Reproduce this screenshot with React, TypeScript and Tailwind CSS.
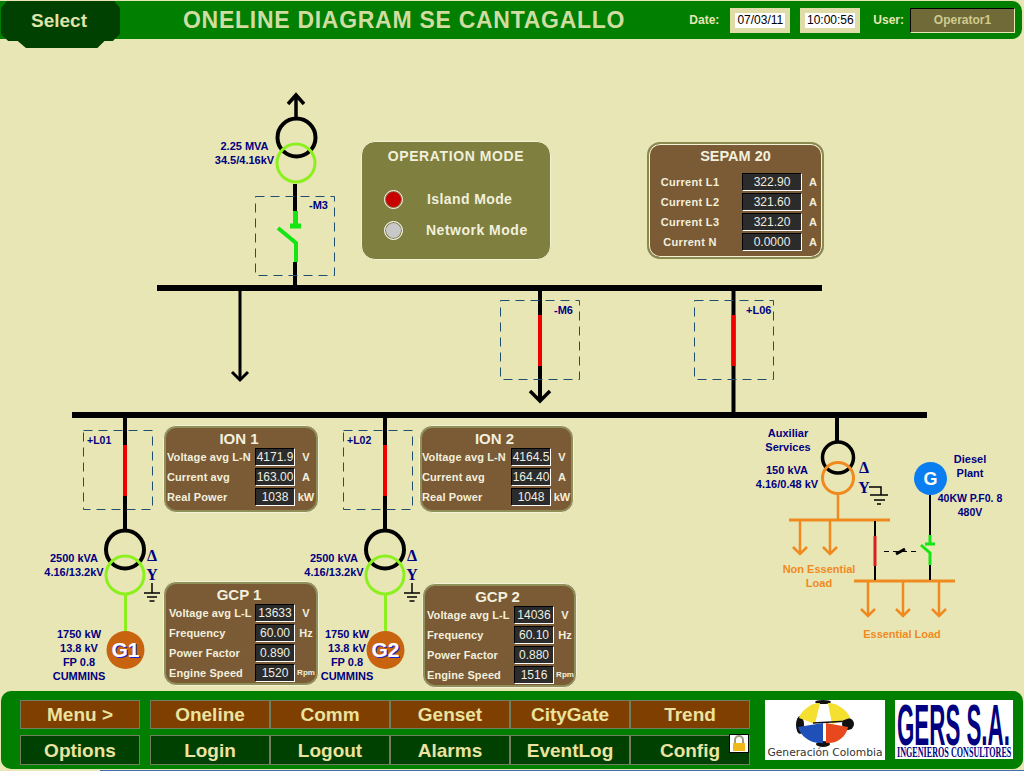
const NAVY = "#000080";
const ORANGE = "#f08a1e";
const LIME = "#8cf01e";
const SWITCH_GREEN = "#14e614";

type Row = { label: string; value: string; unit?: string; small?: boolean };

function Readout({ value }: { value: string }) {
  return (
    <div className="flex h-[18px] w-10 items-center justify-center border border-t-black border-l-black border-r-white border-b-white bg-[#2b2b2b] text-[12px] font-normal leading-none text-[#efefe0]">
      {value}
    </div>
  );
}

// brown meter box used for ION / GCP
function Meter({ title, rows, className, indent }: { title: string; rows: Row[]; className: string; indent: string }) {
  return (
    <div className={`absolute rounded-[13px] border border-[#f4f2d4] bg-[#7b5a36] shadow-[inset_0_0_0_2px_#8f8f58] ${className}`}>
      <div className="flex h-[22px] items-end justify-center pr-1 text-[15px] font-bold leading-[18px] text-[#f2f0dc]">{title}</div>
      <div className="flex flex-col gap-[2px]">
        {rows.map((r) => (
          <div key={r.label} className="grid grid-cols-[91px_40px_22px] items-center">
            <span className={`whitespace-nowrap text-[11px] font-bold tracking-[0.1px] text-[#f2f0dc] ${indent}`}>{r.label}</span>
            <Readout value={r.value} />
            <span className={`text-center font-bold text-[#f2f0dc] ${r.small ? "text-[8px]" : "text-[11px]"}`}>{r.unit}</span>
          </div>
        ))}
      </div>
    </div>
  );
}

function SepamBox() {
  const rows = [
    ["Current L1", "322.90"],
    ["Current L2", "321.60"],
    ["Current L3", "321.20"],
    ["Current N", "0.0000"],
  ];
  return (
    <div className="absolute left-[647px] top-[102px] h-[117px] w-[177px] rounded-[13px] border-2 border-[#8a8a50] bg-[#7b5a36] shadow-[inset_0_0_0_1px_#f4f2d4]">
      <div className="mb-[4px] flex h-[25px] items-center justify-center text-[14.5px] font-bold text-[#f2f0dc]">SEPAM 20</div>
      <div className="flex flex-col gap-[2px]">
        {rows.map(([label, value]) => (
          <div key={label} className="grid grid-cols-[93px_60px_22px] items-center">
            <span className="whitespace-nowrap pr-[11px] text-center text-[11px] font-bold tracking-[0.3px] text-[#f2f0dc]">{label}</span>
            <div className="flex h-[18px] items-center justify-center border border-t-black border-l-black border-r-white border-b-white bg-[#2b2b2b] text-[12px] leading-none text-[#efefe0]">
              {value}
            </div>
            <span className="text-center text-[11px] font-bold text-[#f2f0dc]">A</span>
          </div>
        ))}
      </div>
    </div>
  );
}

function OperationMode() {
  return (
    <div className="absolute left-[361px] top-[101px] h-[119px] w-[190px] rounded-[14px] border border-[#f4f2d4] bg-[#7f7f3f] text-[#f2f0dc]">
      <div className="pt-[5px] text-center text-[14px] font-bold leading-[18px] tracking-[0.6px]">OPERATION MODE</div>
      <div className="mt-[23px] flex h-[22px] items-center">
        <span className="ml-[22px] h-[19px] w-[19px] rounded-full border border-white bg-[#c80000] shadow-[inset_0_0_0_1px_#7f7f3f]" />
        <span className="ml-[24px] text-[14px] font-bold tracking-[0.4px]">Island Mode</span>
      </div>
      <div className="mt-[9px] flex h-[22px] items-center">
        <span className="ml-[22px] h-[19px] w-[19px] rounded-full border border-white bg-[#c8c8c8] shadow-[inset_0_0_0_1px_#7f7f3f]" />
        <span className="ml-[23px] text-[14px] font-bold tracking-[0.5px]">Network Mode</span>
      </div>
    </div>
  );
}

function Labels({ x, y, lines, color = NAVY, size = 11 }: { x: number; y: number; lines: string[]; color?: string; size?: number }) {
  return (
    <text x={x} y={y} fill={color} fontSize={size} fontWeight="bold" textAnchor="middle">
      {lines.map((l, i) => (
        <tspan key={l} x={x} dy={i === 0 ? 0 : 14}>
          {l}
        </tspan>
      ))}
    </text>
  );
}

function Down({ x, y1, y2, color = "#000", w = 3, head = 8 }: { x: number; y1: number; y2: number; color?: string; w?: number; head?: number }) {
  return (
    <g stroke={color} strokeWidth={w} fill="none">
      <path d={`M${x} ${y1}V${y2}`} />
      <path d={`M${x - head} ${y2 - head}L${x} ${y2}L${x + head} ${y2 - head}`} />
    </g>
  );
}

function Dashed({ x, y, w, h }: { x: number; y: number; w: number; h: number }) {
  return <rect x={x + 0.5} y={y + 0.5} width={w} height={h} fill="none" stroke="#1f4f6f" strokeDasharray="9 6" />;
}

function Breaker({ x, y1, y2 }: { x: number; y1: number; y2: number }) {
  return <path d={`M${x} ${y1}V${y2}`} stroke="#f00000" strokeWidth={4} />;
}

function Ground({ x, y }: { x: number; y: number }) {
  return <path d={`M${x} ${y}v10M${x - 8} ${y + 10}h16M${x - 5} ${y + 14}h10M${x - 2.5} ${y + 18}h5`} stroke="#000" strokeWidth={1.5} fill="none" />;
}

// generator feeder: bay with breaker, transformer and genset
function Feeder({ x, tag, gen, lx, gx }: { x: number; tag: string; gen: string; lx: number; gx: number }) {
  return (
    <g>
      <path d={`M${x} 418V530`} stroke="#000" strokeWidth={4} />
      <Breaker x={x} y1={445} y2={496} />
      <Dashed x={x - 42} y={430} w={69} h={79} />
      <text x={x - 38} y={444} fill={NAVY} fontSize={10.5} fontWeight="bold">{tag}</text>
      <circle cx={x} cy={549.5} r={19} fill="none" stroke="#000" strokeWidth={4} />
      <circle cx={x} cy={575} r={19} fill="none" stroke={LIME} strokeWidth={3} />
      <path d={`M${x + 0.5} 594V632`} stroke={LIME} strokeWidth={3} />
      <text x={x + 27} y={561} fill={NAVY} fontSize={16} fontWeight="bold" textAnchor="middle" fontFamily="Liberation Serif, serif">Δ</text>
      <text x={x + 27} y={580} fill={NAVY} fontSize={16} fontWeight="bold" textAnchor="middle" fontFamily="Liberation Serif, serif">Y</text>
      <Ground x={x + 27} y={583} />
      <Labels x={lx} y={562} lines={["2500 kVA", "4.16/13.2kV"]} />
      <Labels x={gx} y={638} lines={["1750 kW", "13.8 kV", "FP 0.8", "CUMMINS"]} />
      <circle cx={x + 0.5} cy={650} r={19} fill="#c8640f" />
      <text x={x + 1.5} y={658} fill="#2020d0" fontSize={21} textAnchor="middle" fontWeight="bold">{gen}</text>
      <text x={x + 0.5} y={657} fill="#fff" fontSize={21} textAnchor="middle" fontWeight="bold">{gen}</text>
    </g>
  );
}

function Diagram() {
  return (
    <svg className="absolute left-0 top-0" width={1024} height={651} viewBox="0 40 1024 651">
      {/* incoming transformer and M3 */}
      <path d="M296 95V119M288 104L296 95L304 104" stroke="#000" strokeWidth={3.5} fill="none" />
      <circle cx={296.5} cy={137.5} r={19} fill="none" stroke="#000" strokeWidth={4} />
      <circle cx={296} cy={163} r={19} fill="none" stroke={LIME} strokeWidth={3} />
      <path d="M295 184V212M295 262V286" stroke="#000" strokeWidth={4} />
      <path d="M295.5 211V225M290 226H301" stroke={SWITCH_GREEN} strokeWidth={5} fill="none" />
      <path d="M296 262V243L278 228" stroke={SWITCH_GREEN} strokeWidth={4} fill="none" />
      <Dashed x={255} y={196} w={79} h={79} />
      <text x={309} y={209} fill={NAVY} fontSize={11} fontWeight="bold">-M3</text>
      <Labels x={244.5} y={150} lines={["2.25 MVA", "34.5/4.16kV"]} />

      {/* buses */}
      <path d="M157 288H822" stroke="#000" strokeWidth={6} />
      <path d="M72 415H927" stroke="#000" strokeWidth={6} />

      {/* outgoing bays */}
      <Down x={240} y1={291} y2={380} />
      <path d="M540 291V398" stroke="#000" strokeWidth={4} />
      <Down x={540} y1={385} y2={401} w={3.5} head={10} />
      <Breaker x={540} y1={315} y2={366} />
      <Dashed x={500} y={300} w={79} h={79} />
      <text x={554} y={314} fill={NAVY} fontSize={11} fontWeight="bold">-M6</text>
      <path d="M733.5 291V412" stroke="#000" strokeWidth={4} />
      <Breaker x={733.5} y1={315} y2={366} />
      <Dashed x={694} y={300} w={79} h={79} />
      <text x={746} y={314} fill={NAVY} fontSize={11} fontWeight="bold">+L06</text>

      <Feeder x={125} tag="+L01" gen="G1" lx={74} gx={79} />
      <Feeder x={385} tag="+L02" gen="G2" lx={334} gx={347} />

      {/* auxiliary services */}
      <path d="M837 418V443" stroke="#000" strokeWidth={4} />
      <circle cx={838} cy={457.5} r={15.5} fill="none" stroke="#000" strokeWidth={3.5} />
      <circle cx={838} cy={478} r={15.5} fill="none" stroke={ORANGE} strokeWidth={3} />
      <path d="M838 494V520" stroke={ORANGE} strokeWidth={2.5} />
      <path d="M789 520H890M854 581H955" stroke={ORANGE} strokeWidth={3} />
      <Down x={800} y1={520} y2={554} color={ORANGE} w={2.5} head={7} />
      <Down x={830} y1={520} y2={554} color={ORANGE} w={2.5} head={7} />
      <Down x={868} y1={581} y2={616} color={ORANGE} w={2.5} head={7} />
      <Down x={903} y1={581} y2={616} color={ORANGE} w={2.5} head={7} />
      <Down x={939} y1={581} y2={616} color={ORANGE} w={2.5} head={7} />
      <path d="M875 521V580" stroke="#000" strokeWidth={2} />
      <path d="M875 536V566" stroke="#d81e1e" strokeWidth={3} />
      <path d="M884 551.5H917" stroke="#000" strokeDasharray="5 4" />
      <path d="M896 554L905 549" stroke="#000" strokeWidth={3} />
      <path d="M930 495V536M930 565V580" stroke="#000" strokeWidth={2} />
      <path d="M930 535V544M925 544H935" stroke={SWITCH_GREEN} strokeWidth={3} fill="none" />
      <path d="M930 565V553L921 545" stroke={SWITCH_GREEN} strokeWidth={3} fill="none" />
      <text x={864} y={473} fill={NAVY} fontSize={16} fontWeight="bold" textAnchor="middle" fontFamily="Liberation Serif, serif">Δ</text>
      <text x={864} y={493} fill={NAVY} fontSize={16} fontWeight="bold" textAnchor="middle" fontFamily="Liberation Serif, serif">Y</text>
      <path d="M869 487H881V495M870 495H888M874 500H885M877 504H881" stroke="#000" strokeWidth={1.5} fill="none" />
      <circle cx={930.5} cy={478.5} r={16.5} fill="#0a7ef0" />
      <text x={930.5} y={485} fill="#fff" fontSize={18} fontWeight="bold" textAnchor="middle">G</text>
      <Labels x={788} y={437} lines={["Auxiliar", "Services"]} />
      <Labels x={787} y={474} lines={["150 kVA", "4.16/0.48 kV"]} />
      <Labels x={970} y={463} lines={["Diesel", "Plant"]} />
      <Labels x={970} y={502} lines={["40KW P.F0. 8", "480V"]} size={10.5} />
      <Labels x={819} y={573} lines={["Non Essential", "Load"]} color={ORANGE} />
      <Labels x={902} y={638} lines={["Essential Load"]} color={ORANGE} />
    </svg>
  );
}

function NavButton({ label, brown }: { label: string; brown?: boolean }) {
  return (
    <div
      className={`flex h-full w-[120px] items-center justify-center border border-[#6f7f5f] text-[19px] font-bold leading-none text-[#ebe3a0] ${brown ? "bg-[#7f3f00]" : "bg-[#004000]"}`}
    >
      {label}
    </div>
  );
}

function LockBadge() {
  return (
    <svg className="absolute right-[1px] top-[-1px]" width={20} height={19} viewBox="0 0 20 19">
      <rect x={0.5} y={0.5} width={19} height={18} fill="#fff" stroke="#000" />
      <path d="M6 9V6a4 4 0 0 1 8 0v3" fill="none" stroke="#9a9a80" strokeWidth={2} />
      <rect x={4} y={9} width={12} height={8} fill="#f0b818" />
    </svg>
  );
}

function GeneracionLogo() {
  return (
    <svg className="h-[60px] w-[120px] bg-white" viewBox="0 0 120 60">
      <ellipse cx={58} cy={2} rx={8} ry={2} fill="#111" />
      <ellipse cx={35} cy={25} rx={4} ry={9} fill="#111" />
      <ellipse cx={83} cy={24} rx={6} ry={6} fill="#111" />
      <ellipse cx={58} cy={44} rx={7} ry={3} fill="#111" />
      <path d="M55 3C45 3 36 11 34 18L50 24Z" fill="#f5e030" />
      <path d="M63 3C73 3 83 11 85 18L67 24Z" fill="#f5e030" />
      <path d="M48 23L85 21" stroke="#111" strokeWidth={1.5} />
      <path d="M33 27L58 23V43C46 44 36 37 33 27Z" fill="#1f50b8" />
      <path d="M83 27L61 23V43C72 44 81 37 83 27Z" fill="#e8481e" />
      <text x={60} y={56} fill="#333" fontSize={10.5} textAnchor="middle" fontFamily="DejaVu Sans, sans-serif" textLength={115} lengthAdjust="spacingAndGlyphs">
        Generación Colombia
      </text>
    </svg>
  );
}

function GersLogo() {
  return (
    <svg className="h-[59px] w-[118px] bg-white" viewBox="0 0 118 59">
      <text transform="translate(2 45) scale(0.385 1)" fill="#000080" fontSize={58} fontWeight="bold" fontFamily="Liberation Sans, sans-serif">
        GERS S.A.
      </text>
      <text transform="translate(2 57) scale(0.58 1)" fill="#000080" fontSize={14} fontWeight="bold" fontFamily="Liberation Serif, serif">
        INGENIEROS CONSULTORES
      </text>
    </svg>
  );
}

export default function App() {
  return (
    <div className="flex h-[771px] w-[1024px] flex-col overflow-hidden bg-[#e9e6b6] font-['Liberation_Sans',Arial,sans-serif]">
      {/* header */}
      <header className="relative z-10 mr-[2px] mt-[1px] flex h-[38px] shrink-0 items-center rounded-br-[10px] rounded-tr-[10px] bg-[#007f00] pl-[1px]">
        <div className="flex h-[47px] w-[119px] shrink-0 items-center justify-center self-start bg-[#004000] pb-[6px] pr-[3px] text-[19px] font-bold text-[#dfe3a8] [clip-path:polygon(5%_0,95%_0,100%_15%,100%_70%,94%_85%,87%_85%,81%_100%,21%_100%,14%_85%,6%_85%,0_70%,0_15%)]">
          Select
        </div>
        <h1 className="ml-[63px] whitespace-nowrap text-[23px] font-bold leading-none tracking-[0.72px] text-[#d0dca0]">ONELINE DIAGRAM SE CANTAGALLO</h1>
        <div className="ml-auto flex items-center pr-[7px]">
          <span className="text-[12px] font-bold text-[#e9e6b6]">Date:</span>
          <div className="ml-[11px] flex h-[25px] w-[60px] items-center justify-center border-[5px] border-[#e0dca8] bg-white text-[12px] text-black">07/03/11</div>
          <div className="ml-[10px] flex h-[25px] w-[60px] items-center justify-center border-[5px] border-[#e0dca8] bg-white text-[12px] text-black">10:00:56</div>
          <span className="ml-[13px] text-[12px] font-bold text-[#e9e6b6]">User:</span>
          <div className="ml-[6px] flex h-[25px] w-[105px] items-center justify-center border border-t-black border-l-black border-r-[#e9e6b6] border-b-[#e9e6b6] bg-[#6f6a37] text-[12px] font-bold text-[#cfcb8f]">
            Operator1
          </div>
        </div>
      </header>

      {/* diagram canvas */}
      <main className="relative mt-[1px] h-[651px] w-[1024px] shrink-0 text-[#f2f0dc]">
        <Diagram />
        <OperationMode />
        <SepamBox />
        <Meter
          title="ION 1"
          className="left-[163px] top-[385px] h-[88px] w-[156px]"
          indent="pl-[3px]"
          rows={[
            { label: "Voltage avg L-N", value: "4171.9", unit: "V" },
            { label: "Current avg", value: "163.00", unit: "A" },
            { label: "Real Power", value: "1038", unit: "kW" },
          ]}
        />
        <Meter
          title="ION 2"
          className="left-[419px] top-[385px] h-[88px] w-[155px]"
          indent="pl-[2px]"
          rows={[
            { label: "Voltage avg L-N", value: "4164.5", unit: "V" },
            { label: "Current avg", value: "164.40", unit: "A" },
            { label: "Real Power", value: "1048", unit: "kW" },
          ]}
        />
        <Meter
          title="GCP 1"
          className="left-[163px] top-[541px] h-[105px] w-[156px]"
          indent="pl-[5px]"
          rows={[
            { label: "Voltage avg L-L", value: "13633", unit: "V" },
            { label: "Frequency", value: "60.00", unit: "Hz" },
            { label: "Power Factor", value: "0.890" },
            { label: "Engine Speed", value: "1520", unit: "Rpm", small: true },
          ]}
        />
        <Meter
          title="GCP 2"
          className="left-[422px] top-[543px] h-[105px] w-[155px]"
          indent="pl-[4px]"
          rows={[
            { label: "Voltage avg L-L", value: "14036", unit: "V" },
            { label: "Frequency", value: "60.10", unit: "Hz" },
            { label: "Power Factor", value: "0.880" },
            { label: "Engine Speed", value: "1516", unit: "Rpm", small: true },
          ]}
        />
      </main>

      {/* footer nav */}
      <footer className="mx-[1px] flex h-[78px] shrink-0 items-start rounded-[10px] bg-[#007f00] pl-[19px] pt-[9px]">
        <div className="flex flex-col gap-[6px]">
          <div className="h-[29px]"><NavButton label="Menu >" brown /></div>
          <div className="h-[30px]"><NavButton label="Options" /></div>
        </div>
        <div className="ml-[10px] flex flex-col gap-[6px]">
          <div className="flex h-[29px]">
            {["Oneline", "Comm", "Genset", "CityGate", "Trend"].map((l) => (
              <NavButton key={l} label={l} brown />
            ))}
          </div>
          <div className="flex h-[30px]">
            {["Login", "Logout", "Alarms", "EventLog"].map((l) => (
              <NavButton key={l} label={l} />
            ))}
            <div className="relative">
              <NavButton label="Config" />
              <LockBadge />
            </div>
          </div>
        </div>
        <div className="ml-[15px]"><GeneracionLogo /></div>
        <div className="ml-[10px]"><GersLogo /></div>
      </footer>
      <div className="ml-[100px] mt-[1px] h-[2px] bg-[#3f6fb0]" />
    </div>
  );
}
